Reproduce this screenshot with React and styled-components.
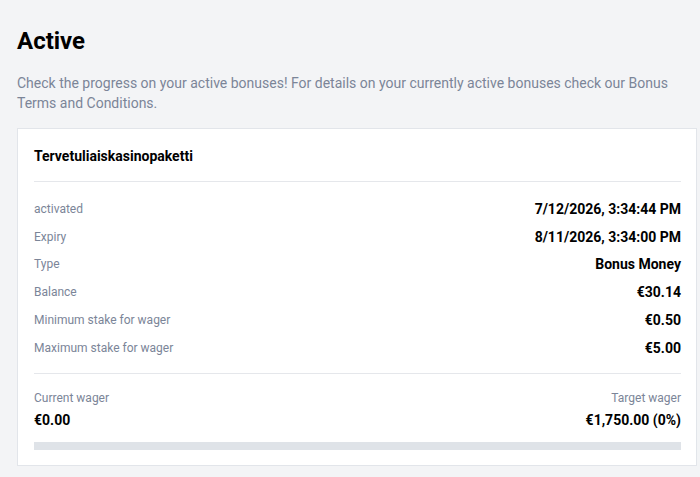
import React from 'react';
import styled, {createGlobalStyle} from 'styled-components';

const GlobalStyle = createGlobalStyle`
	html, body {
		margin: 0;
		padding: 0;
		background: #f3f4f6;
		font-family: Roboto, "Liberation Sans", Arial, sans-serif;
	}
`;

const Page = styled.div`
	padding: 27px 3px 12px 17px;
	width: 700px;
	box-sizing: border-box;
`;

const Heading = styled.h1`
	margin: 0;
	font-size: 24px;
	line-height: 28px;
	font-weight: 700;
	color: #000;
`;

const Intro = styled.p`
	margin: 18px 0 15px;
	font-size: 14px;
	line-height: 20px;
	color: #7b8598;
`;

const Card = styled.div`
	background: #fff;
	border: 1px solid #e2e5ea;
	padding: 0 15px 15px 16px;
`;

const CardHeader = styled.div`
	padding: 17px 0 15px;
	border-bottom: 1px solid #e5e7eb;
	font-size: 14px;
	line-height: 20px;
	font-weight: 700;
	color: #000;
`;

const Details = styled.div`
	padding: 13px 0 11px;
	border-bottom: 1px solid #e5e7eb;
`;

const Row = styled.div`
	display: flex;
	justify-content: space-between;
	align-items: center;
	height: 27.8px;
`;

const Label = styled.span`
	font-size: 12px;
	color: #7b8598;
`;

const Value = styled.span`
	font-size: 14px;
	font-weight: 700;
	color: #000;
`;

const Wager = styled.div`
	padding-top: 15px;
	display: grid;
	grid-template-columns: 1fr 1fr;
	row-gap: 3px;
`;

const WagerLabel = styled.div`
	font-size: 12px;
	line-height: 18px;
	color: #7b8598;
	text-align: ${p => (p.$right ? 'right' : 'left')};
`;

const WagerValue = styled.div`
	font-size: 14px;
	line-height: 20px;
	font-weight: 700;
	color: #000;
	text-align: ${p => (p.$right ? 'right' : 'left')};
`;

const Bar = styled.div`
	margin-top: 12px;
	height: 8px;
	background: #dfe3e8;
`;

const Fill = styled.div`
	height: 100%;
	background: #2f6fed;
`;

const details = [
	['activated', '7/12/2026, 3:34:44 PM'],
	['Expiry', '8/11/2026, 3:34:00 PM'],
	['Type', 'Bonus Money'],
	['Balance', '€30.14'],
	['Minimum stake for wager', '€0.50'],
	['Maximum stake for wager', '€5.00'],
];

export default function App() {
	const progress = 0;
	return (
		<Page>
			<GlobalStyle />
			<Heading>Active</Heading>
			<Intro>
				Check the progress on your active bonuses! For details on your currently active bonuses check our Bonus Terms and Conditions.
			</Intro>
			<Card>
				<CardHeader>Tervetuliaiskasinopaketti</CardHeader>
				<Details>
					{details.map(([label, value]) => (
						<Row key={label}>
							<Label>{label}</Label>
							<Value>{value}</Value>
						</Row>
					))}
				</Details>
				<Wager>
					<WagerLabel>Current wager</WagerLabel>
					<WagerLabel $right>Target wager</WagerLabel>
					<WagerValue>€0.00</WagerValue>
					<WagerValue $right>€1,750.00 (0%)</WagerValue>
				</Wager>
				<Bar>
					<Fill style={{width: `${progress}%`}} />
				</Bar>
			</Card>
		</Page>
	);
}
